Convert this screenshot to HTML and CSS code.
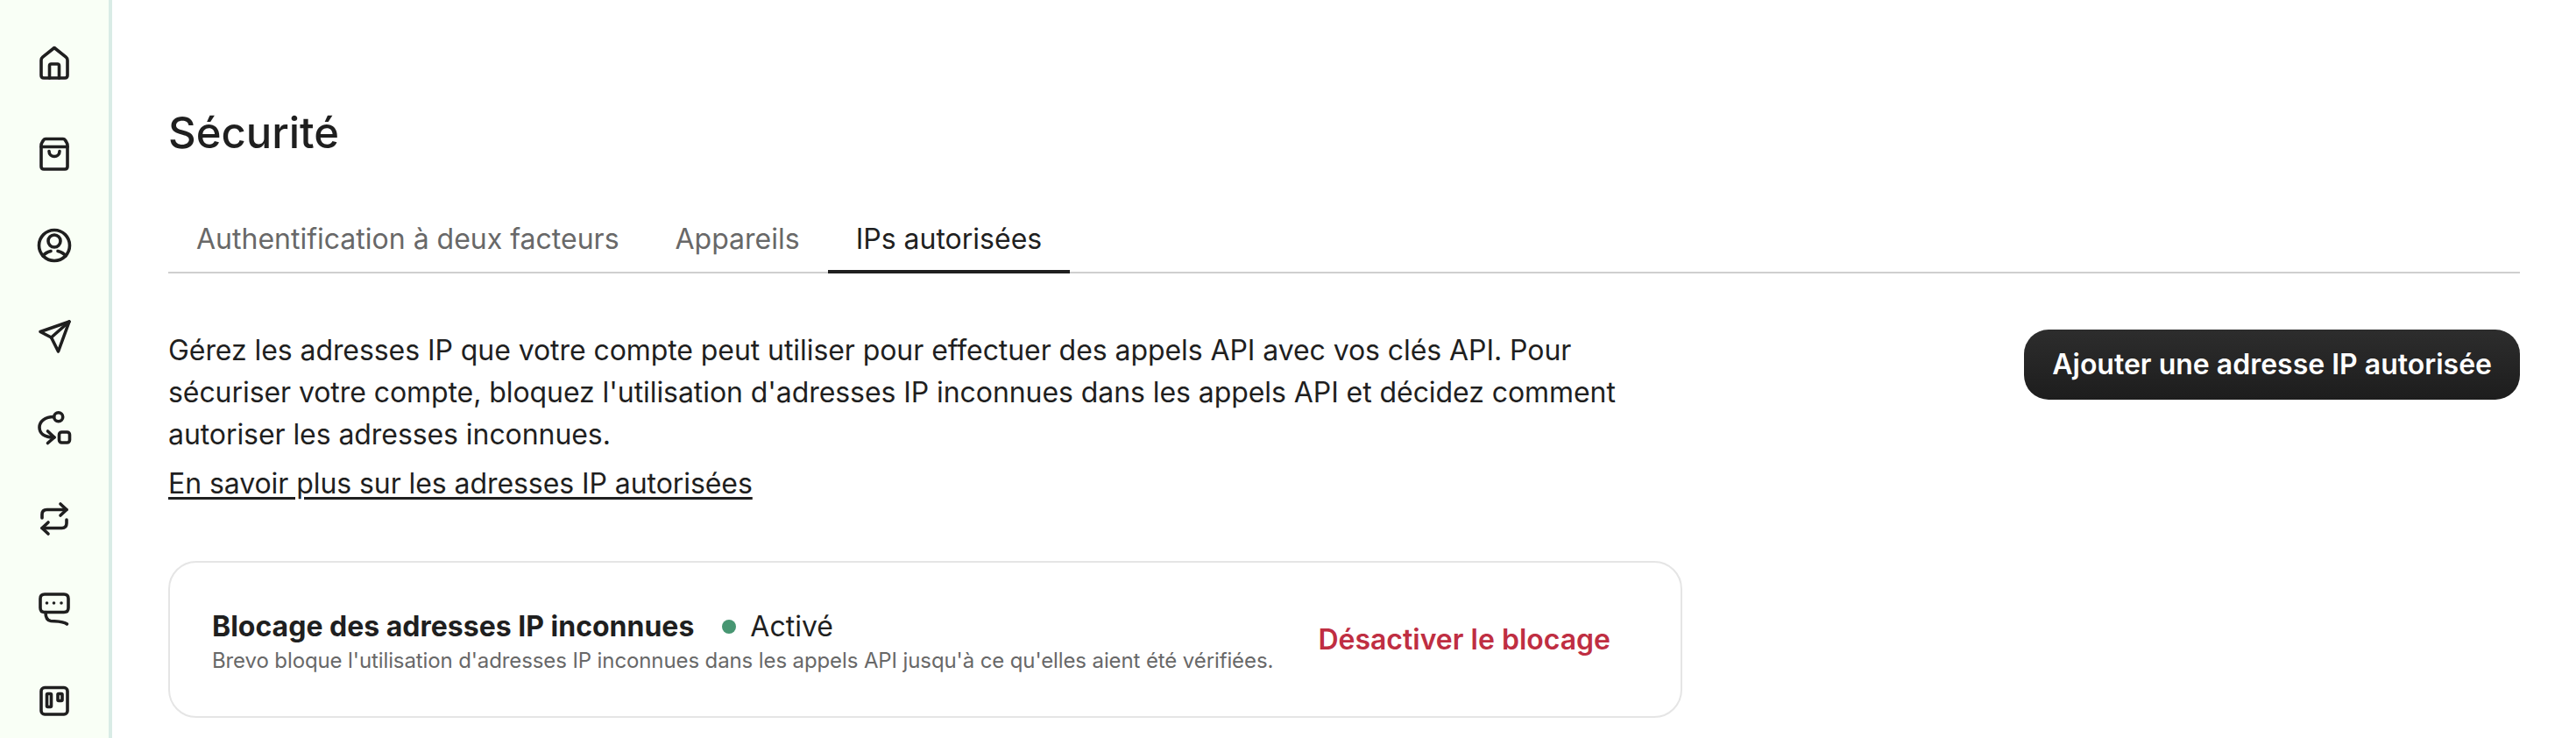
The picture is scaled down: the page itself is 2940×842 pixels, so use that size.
FILE: index.html
```html
<!DOCTYPE html>
<html lang="fr">
<head>
<meta charset="utf-8">
<title>Sécurité</title>
<link rel="stylesheet" href="styles.css">
</head>
<body>
<div class="app">
  <aside class="sidebar">
    <a class="nav-icon"><svg viewBox="0 0 48 48"><path d="M24 6.5 10.7 17.2Q9 18.6 9 20.7V38Q9 41 12 41H36Q39 41 39 38V20.7Q39 18.6 37.3 17.2Z"/><path d="M18.5 41V27Q18.5 25 20.5 25H27.5Q29.5 25 29.5 27V41"/></svg></a>
    <a class="nav-icon"><svg viewBox="0 0 48 48"><path d="M14 6.5H34Q35.5 6.5 36.500 8L38 10.500Q39 12 39 14V38Q39 41 36 41H12Q9 41 9 38V14Q9 12 10 10.500L11.500 8Q12.500 6.500 14 6.500Z"/><path d="M9 15.500H39"/><path d="M18 20.500C18 28.500 30 28.500 30 20.500"/></svg></a>
    <a class="nav-icon"><svg viewBox="0 0 48 48"><circle cx="24" cy="24" r="17.500"/><circle cx="24" cy="19" r="7"/><path d="M11 36Q14 32 20 30.500M37 36Q34 32 28 30.500"/></svg></a>
    <a class="nav-icon"><svg viewBox="0 0 48 48"><path d="M41 7 8 18.500 20.500 25 28.500 41Z"/><path d="M41 7 20.500 25"/></svg></a>
    <a class="nav-icon"><svg viewBox="0 0 48 48"><circle cx="28.700" cy="11.700" r="5"/><path d="M23.500 11.500C13 11.500 7 17 7 23.500C7 30 12 35 24 35"/><path d="M16.500 28 24 35 16.500 41.500"/><rect x="29.500" y="29" width="12" height="12" rx="3"/></svg></a>
    <a class="nav-icon"><svg viewBox="0 0 48 48"><path d="M10 23V19Q10 13.500 15.500 13.500H38"/><path d="M31 7 38 13.500 31 20"/><path d="M38 25V29Q38 34.500 32.500 34.500H10"/><path d="M17 28 10 34.500 17 41"/></svg></a>
    <a class="nav-icon"><svg viewBox="0 0 48 48"><path d="M13 6H35Q40 6 40 11V21.500Q40 26.500 35 26.500H13Q8 26.500 8 21.500V11Q8 6 13 6Z"/><path d="M14 26.500C14 32 15 36 20 36.500C28 37 34 36.500 38.500 40"/><g class="dots"><circle cx="15.500" cy="16" r="1.800"/><circle cx="23.500" cy="16" r="1.800"/><circle cx="32" cy="16" r="1.800"/></g></svg></a>
    <a class="nav-icon"><svg viewBox="0 0 48 48"><rect x="9" y="8.500" width="30" height="30.500" rx="4"/><rect x="15.500" y="15.500" width="5" height="15" rx="1"/><rect x="28" y="15.500" width="5" height="8" rx="1"/></svg></a>
  </aside>
  <main class="content">
    <h1 class="title">Sécurité</h1>
    <nav class="tabs">
      <a class="tab">Authentification à deux facteurs</a>
      <a class="tab">Appareils</a>
      <a class="tab active">IPs autorisées</a>
    </nav>
    <section class="intro">
      <div class="intro-text">
        <p>Gérez les adresses IP que votre compte peut utiliser pour effectuer des appels API avec vos clés API. Pour sécuriser votre compte, bloquez l'utilisation d'adresses IP inconnues dans les appels API et décidez comment autoriser les adresses inconnues.</p>
        <a class="learn-more">En savoir plus sur les adresses IP autorisées</a>
      </div>
      <button class="primary-btn">Ajouter une adresse IP autorisée</button>
    </section>
    <section class="card">
      <div class="card-text">
        <div class="card-head">
          <strong class="card-title">Blocage des adresses IP inconnues</strong>
          <span class="status"><i class="dot"></i>Activé</span>
        </div>
        <p class="card-desc">Brevo bloque l'utilisation d'adresses IP inconnues dans les appels API jusqu'à ce qu'elles aient été vérifiées.</p>
      </div>
      <button class="danger-btn">Désactiver le blocage</button>
    </section>
  </main>
</div>
</body>
</html>
```

FILE: styles.css
```css
* { box-sizing: border-box; }
html, body { margin: 0; height: 100%; overflow: hidden; background: #fff; }
body { font-family: Inter, "Liberation Sans", sans-serif; color: #1f1f1f; }

.app { display: flex; height: 842px; overflow: hidden; }

.sidebar {
  flex: 0 0 128px;
  background: #f9fff6;
  border-right: 4px solid #d9ece6;
  padding-top: 48px;
  display: flex;
  flex-direction: column;
  align-items: center;
  gap: 56px;
}
.nav-icon { display: block; width: 48px; height: 48px; flex: none; }
.nav-icon svg {
  display: block; width: 48px; height: 48px;
  fill: none; stroke: #1f1f1f; stroke-width: 3.6; stroke-linecap: round; stroke-linejoin: round;
}
.nav-icon .dots circle { fill: #1f1f1f; stroke: none; }

.content { flex: 1; min-width: 0; padding: 120px 64px 0; }

.title { margin: 0; font-size: 49px; line-height: 64px; font-weight: 500; letter-spacing: 0; }

.tabs { display: flex; margin-top: 62px; border-bottom: 2px solid #cfcfcf; height: 66px; }
.tab { padding: 0 32px; font-size: 32px; line-height: 54px; color: #686868; height: 66px; }
.tab.active { color: #1f1f1f; border-bottom: 4px solid #1f1f1f; }

.intro { display: flex; justify-content: space-between; align-items: flex-start; margin-top: 64px; }
.intro-text { width: 1720px; font-size: 32px; line-height: 48px; letter-spacing: -0.07px; }
.intro-text p { margin: 0; }
.learn-more { display: block; margin-top: 8px; color: #1f1f1f; text-decoration: underline; text-underline-offset: 4px; }

.primary-btn {
  height: 80px; padding: 0 32px; border: 0; border-radius: 28px;
  background: linear-gradient(#2d2d2d, #1d1d1d);
  color: #fff; font: 600 32px/48px Inter, sans-serif;
}

.card {
  display: flex; align-items: center; justify-content: space-between;
  width: 1728px; height: 179px; margin-top: 64px; padding: 0 48px;
  border: 2px solid #e5e5e5; border-radius: 32px;
}
.card-text { padding-top: 5px; }
.card-head { display: flex; align-items: center; gap: 32px; }
.card-title { font-size: 32px; line-height: 40px; font-weight: 700; }
.status { display: flex; align-items: center; gap: 16px; font-size: 32px; line-height: 40px; }
.dot { width: 16px; height: 16px; border-radius: 50%; background: #479672; }
.card-desc { margin: 3px 0 0; font-size: 24px; line-height: 32px; letter-spacing: -0.11px; color: #686868; }
.danger-btn { padding: 0 32px; border: 0; background: none; color: #bf2e42; font: 600 32px/48px Inter, sans-serif; white-space: nowrap; }
```
